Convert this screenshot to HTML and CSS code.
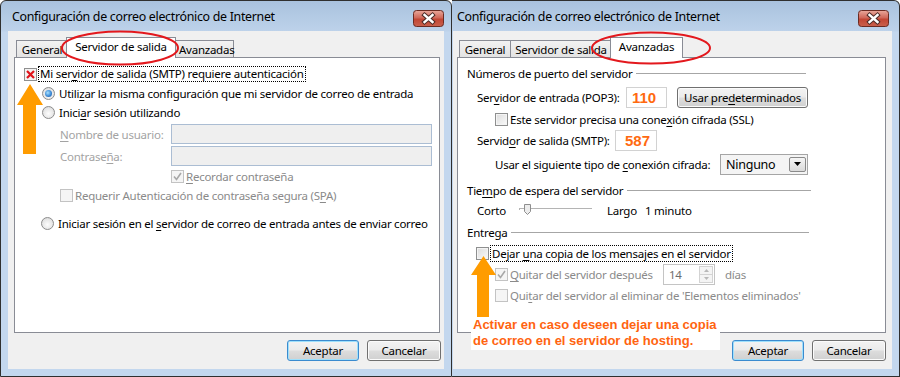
FILE: index.html
```html
<!DOCTYPE html>
<html lang="es">
<head>
<meta charset="utf-8">
<title>Configuración de correo electrónico de Internet</title>
<link rel="stylesheet" href="styles.css">
</head>
<body>
<div class="desk">
  <section class="win win-left">
    <header class="titlebar">
      <span class="title">Configuración de correo electrónico de Internet</span>
      <span class="close"><svg width="31" height="17" viewBox="0 0 31 17"><defs><linearGradient id="cg1" x1="0" y1="0" x2="0" y2="1"><stop offset="0" stop-color="#e9a99c"/><stop offset="0.45" stop-color="#d0685a"/><stop offset="0.55" stop-color="#c24634"/><stop offset="1" stop-color="#c9614d"/></linearGradient></defs><rect x="0.5" y="0.5" width="30" height="16" rx="3" fill="url(#cg1)" stroke="#6b2b22"/><path d="M11.5 5 L19.5 12 M19.5 5 L11.5 12" stroke="#4a2a26" stroke-width="4.4" stroke-linecap="square"/><path d="M11.5 5 L19.5 12 M19.5 5 L11.5 12" stroke="#ffffff" stroke-width="2.4" stroke-linecap="square"/></svg></span>
    </header>
    <div class="client">
      <div class="tabs">
        <span class="tab t-gen-l">General</span>
        <span class="tab active t-sal-l">Servidor de salida</span>
        <span class="tab t-ava-l">Avanzadas</span>
      </div>
      <div class="panel">
        <div class="row l-r1">
          <span class="chk chk-x"><svg width="11" height="11" viewBox="0 0 11 11"><path d="M2 2 L9 9 M9 2 L2 9" stroke="#e0141b" stroke-width="2.2"/></svg></span>
          <span class="focus">Mi ser<u>v</u>idor de salida (SMTP) requiere autenticación</span>
        </div>
        <div class="row l-r2"><span class="radio on"></span><span class="rtext">Utili<u>z</u>ar la misma configuración que mi servidor de correo de entrada</span></div>
        <div class="row l-r3"><span class="radio"></span><span class="rtext">Inici<u>a</u>r sesión utilizando</span></div>
        <div class="row l-field l-f1"><span class="lbl dis"><u>N</u>ombre de usuario:</span><span class="input dis-input"></span></div>
        <div class="row l-field l-f2"><span class="lbl dis">Contrase<u>ñ</u>a:</span><span class="input dis-input"></span></div>
        <div class="row l-rem"><span class="chk chk-dis"><svg width="11" height="11" viewBox="0 0 11 11"><path d="M2 5.5 L4.5 8.5 L9 2" fill="none" stroke="#a8a8a8" stroke-width="1.6"/></svg></span><span class="ctext dis2"><u>R</u>ecordar contraseña</span></div>
        <div class="row l-spa"><span class="chk chk-dis"></span><span class="ctext dis2">Requerir Autenticación de contraseña segura (S<u>P</u>A)</span></div>
        <div class="row l-r8"><span class="radio"></span><span class="rtext">Iniciar sesión en el <u>s</u>ervidor de correo de entrada antes de enviar correo</span></div>
      </div>
      <div class="buttons">
        <span class="btn btn-default">Aceptar</span>
        <span class="btn">Cancelar</span>
      </div>
    </div>
    <svg class="mark-ellipse mark-l" width="122" height="38" viewBox="0 0 122 38"><ellipse cx="61" cy="19" rx="58" ry="16.5" fill="none" stroke="#e3181d" stroke-width="2"/></svg>
    <svg class="mark-arrow arrow-l" width="28" height="72" viewBox="0 0 28 72"><polygon points="13,0 26,21 19,21 19,70 6,70 6,21 0,21" fill="#ff9c00"/></svg>
  </section>

  <section class="win win-right">
    <header class="titlebar">
      <span class="title">Configuración de correo electrónico de Internet</span>
      <span class="close"><svg width="31" height="17" viewBox="0 0 31 17"><defs><linearGradient id="cg2" x1="0" y1="0" x2="0" y2="1"><stop offset="0" stop-color="#e9a99c"/><stop offset="0.45" stop-color="#d0685a"/><stop offset="0.55" stop-color="#c24634"/><stop offset="1" stop-color="#c9614d"/></linearGradient></defs><rect x="0.5" y="0.5" width="30" height="16" rx="3" fill="url(#cg2)" stroke="#6b2b22"/><path d="M11.5 5 L19.5 12 M19.5 5 L11.5 12" stroke="#4a2a26" stroke-width="4.4" stroke-linecap="square"/><path d="M11.5 5 L19.5 12 M19.5 5 L11.5 12" stroke="#ffffff" stroke-width="2.4" stroke-linecap="square"/></svg></span>
    </header>
    <div class="client">
      <div class="tabs">
        <span class="tab t-gen-r">General</span>
        <span class="tab t-sal-r">Servidor de salida</span>
        <span class="tab active t-ava-r">Avanzadas</span>
      </div>
      <div class="panel">
        <div class="group g1"><span class="gtext">Números de puerto del servidor</span><span class="gline"></span></div>
        <div class="row r-pop">
          <span class="plabel w-pop">Ser<u>v</u>idor de entrada (POP3):</span>
          <span class="port p-pop">110</span>
          <span class="btn btn-wide">Usar pre<u>d</u>eterminados</span>
        </div>
        <div class="row r-ssl"><span class="chk"></span><span class="ctext">Este servidor precisa una cone<u>x</u>ión cifrada (SSL)</span></div>
        <div class="row r-smtp">
          <span class="plabel w-smtp">Servid<u>o</u>r de salida (SMTP):</span>
          <span class="port p-smtp">587</span>
        </div>
        <div class="row r-cif">
          <span class="plabel w-cif">Usar el siguiente tipo de <u>c</u>onexión cifrada:</span>
          <span class="select"><span class="sel-text">Ninguno</span><span class="sel-btn"><svg width="7" height="4" viewBox="0 0 7 4"><polygon points="0,0 7,0 3.5,4" fill="#000"/></svg></span></span>
        </div>
        <div class="group g2"><span class="gtext">Tie<u>m</u>po de espera del servidor</span><span class="gline"></span></div>
        <div class="row r-cor">
          <span class="plabel w-cor">Corto</span>
          <span class="slider"><svg width="74" height="14" viewBox="0 0 74 14"><rect x="0" y="5" width="73" height="1" fill="#b4b4b4"/><rect x="0" y="6" width="73" height="1" fill="#ffffff"/><rect x="0" y="5" width="1" height="2" fill="#b4b4b4"/><path d="M5.5 1.5 H11.5 V8.5 L8.5 11.5 L5.5 8.5 Z" fill="#ececec" stroke="#8e8e8e"/></svg></span>
          <span class="plabel w-lar">Largo</span>
          <span>1 minuto</span>
        </div>
        <div class="group g3"><span class="gtext">Entrega</span><span class="gline"></span></div>
        <div class="row r-dej"><span class="chk"></span><span class="ctext focus">Dejar <u>u</u>na copia de los mensajes en el servidor</span></div>
        <div class="row r-q1">
          <span class="chk chk-dis"><svg width="11" height="11" viewBox="0 0 11 11"><path d="M2 5.5 L4.5 8.5 L9 2" fill="none" stroke="#a8a8a8" stroke-width="1.6"/></svg></span>
          <span class="ctext dis2 w-q1"><u>Q</u>uitar del servidor después</span>
          <span class="spin"><span class="spin-val">14</span><span class="spin-btns"><span class="spin-b"><svg width="5" height="3" viewBox="0 0 5 3"><polygon points="0,3 5,3 2.5,0" fill="#b8b8b8"/></svg></span><span class="spin-b"><svg width="5" height="3" viewBox="0 0 5 3"><polygon points="0,0 5,0 2.5,3" fill="#b8b8b8"/></svg></span></span></span>
          <span class="dis2 dias">días</span>
        </div>
        <div class="row r-q2"><span class="chk chk-dis"></span><span class="ctext dis2">Qui<u>t</u>ar del servidor al eliminar de 'Elementos eliminados'</span></div>
      </div>
      <div class="buttons">
        <span class="btn btn-default">Aceptar</span>
        <span class="btn">Cancelar</span>
      </div>
    </div>
    <svg class="mark-ellipse mark-r" width="122" height="36" viewBox="0 0 122 36"><ellipse cx="61" cy="18" rx="59" ry="15.5" fill="none" stroke="#e3181d" stroke-width="2"/></svg>
    <svg class="mark-arrow arrow-r" width="26" height="64" viewBox="0 0 26 64"><polygon points="12.5,0 25,19 18,19 18,64 6,64 6,19 0,19" fill="#ff9c00"/></svg>
    <div class="note">Activar en caso deseen dejar una copia<br>de correo en el servidor de hosting.</div>
  </section>
</div>
</body>
</html>
```

FILE: styles.css
```css
* { box-sizing: border-box; }
html, body { margin: 0; padding: 0; }
body {
  width: 900px;
  height: 377px;
  overflow: hidden;
  background: #ffffff;
  font-family: "Noto Sans", "Open Sans", sans-serif;
  font-size: 11.5px;
  letter-spacing: -0.25px;
  color: #000;
}
u { text-decoration: underline; text-underline-offset: 2px; text-decoration-thickness: 1px; }

.desk { display: flex; width: 900px; height: 377px; }

.win {
  position: relative;
  height: 377px;
  display: flex;
  flex-direction: column;
  border: 1px solid #2f2f2f;
  border-radius: 6px 6px 0 0;
  background: linear-gradient(#a9c2de 0px, #bdd2ea 30px, #c3d7ee 31px, #c3d7ee 100%);
}
.win-left { width: 452px; padding: 0 7px 7px 7px; }
.win-right { width: 448px; border-left: none; border-radius: 0 6px 0 0; padding: 0 7px 7px 1px; }

.titlebar {
  height: 30px;
  display: flex;
  align-items: center;
  justify-content: space-between;
  flex: none;
}
.win-left .titlebar { padding-left: 4px; }
.win-right .titlebar { padding-left: 4px; padding-right: 3px; }
.title { font-size: 12.4px; letter-spacing: -0.3px; color: #000; margin-top: 1px; }
.close { display: flex; margin-top: 5px; }

.client {
  flex: 1;
  background: #f0f0f0;
  display: flex;
  flex-direction: column;
}
.win-left .client { padding: 6px 4px 0 6px; }
.win-right .client { padding: 6px 6px 0 4px; }

.tabs { display: flex; align-items: flex-end; height: 20px; position: relative; z-index: 2; }
.win-left .tabs { padding-left: 2px; }
.win-right .tabs { padding-left: 2px; }

.tab {
  height: 17px;
  border: 1px solid #898c95;
  border-bottom: none;
  background: linear-gradient(#f2f2f2, #e3e3e3);
  display: flex;
  align-items: center;
  justify-content: center;
  white-space: nowrap;
}
.tab + .tab { margin-left: -1px; }
.tab.active {
  height: 21px;
  background: #ffffff;
  margin: 0 -2px -1px -2px;
  position: relative;
  z-index: 2;
  padding-bottom: 3px;
}
.t-gen-l { width: 52px; }
.t-sal-l { width: 110px; }
.t-ava-l { width: 61px; justify-content: flex-start; padding-left: 5px; }
.t-gen-r { width: 52px; }
.t-sal-r { width: 102px; }
.t-ava-r { width: 73px; }

.panel {
  height: 276px;
  background: #ffffff;
  border: 1px solid #898c95;
  position: relative;
  z-index: 1;
  display: flex;
  flex-direction: column;
}

.row { display: flex; align-items: center; white-space: nowrap; }

/* left panel rows */
.l-r1 { margin-top: 6px; height: 20px; padding-left: 9px; }
.l-r1 .focus { margin-left: 2px; }
.l-r2 { height: 19px; padding-left: 27px; }
.l-r3 { height: 19px; padding-left: 27px; }
.l-field { height: 20px; margin-top: 2px; padding-left: 45px; }
.lbl { width: 111px; }
.input { width: 261px; height: 20px; }
.dis-input { background: #efefef; border: 1px solid #abbdd3; }
.l-rem { height: 20px; padding-left: 156px; }
.l-spa { height: 19px; padding-left: 45px; }
.l-r8 { height: 20px; margin-top: 8px; padding-left: 26px; }

.rtext { margin-left: 4px; }
.ctext { margin-left: 2px; }
.dis { color: #a3a3a3; }
.dis2 { color: #8a8a8a; }

.focus { outline: 1px dotted #000; outline-offset: 0; padding: 0 1px; line-height: 14px; }

/* controls */
.chk {
  width: 13px; height: 13px; flex: none;
  border: 1px solid #8e8f8f;
  background: linear-gradient(135deg, #dcdcdc, #fafafa);
  box-shadow: inset 0 0 0 1px #f4f4f4;
  display: flex; align-items: center; justify-content: center;
}
.chk-x { background: #f3f3f3; box-shadow: none; border-color: #8f8f8f; }
.chk-dis { border-color: #c3c3c3; background: #f5f5f5; box-shadow: none; }
.radio {
  width: 13px; height: 13px; flex: none;
  border-radius: 50%;
  border: 1px solid #8c8c8c;
  background: radial-gradient(circle at 50% 60%, #fdfdfd 0%, #e6e6e6 60%, #cfcfcf 100%);
  position: relative;
}
.radio.on::after {
  content: "";
  position: absolute;
  left: 2px; top: 2px;
  width: 7px; height: 7px;
  border-radius: 50%;
  background: radial-gradient(circle at 40% 40%, #a8e2ff 0%, #3c8ad6 55%, #1a4f97 100%);
}

.btn {
  height: 21px;
  display: inline-flex; align-items: center; justify-content: center;
  border: 1px solid #707070;
  border-radius: 3px;
  background: linear-gradient(#f3f3f3 0%, #ebebeb 48%, #dddddd 52%, #d0d0d0 100%);
  box-shadow: inset 0 0 0 1px #fbfbfb;
  white-space: nowrap;
}
.btn-default { border-color: #3b8bcf; box-shadow: inset 0 0 0 1px #9ee0fc; }
.buttons { display: flex; justify-content: flex-end; gap: 8px; margin-top: 7px; }
.win-left .buttons { margin-right: -1px; }
.buttons .btn { width: 72px; }
.buttons .btn + .btn { width: 74px; }

/* right panel */
.group { display: flex; align-items: center; height: 18px; padding-left: 9px; }
.gtext { white-space: nowrap; }
.gline { height: 1px; background: #a6a6a6; flex: none; margin-left: 4px; }
.g1 { margin-top: 6px; }
.g1 .gline { width: 170px; }
.g2 { margin-top: 7px; }
.g2 .gline { width: 184px; }
.g3 { margin-top: 3px; }
.g3 .gline { width: 298px; }

.r-pop { height: 21px; margin-top: 5px; padding-left: 19px; }
.w-pop { width: 149px; }
.port {
  height: 21px; border: 1px solid #d2d2d2; background: #fff;
  font-family: "Liberation Sans", Arial, sans-serif; font-weight: bold; font-size: 15px; letter-spacing: 0; color: #ff6a10;
  display: flex; align-items: center; padding-left: 5px;
}
.p-pop { width: 41px; }
.p-smtp { width: 42px; padding-left: 9px; }
.btn-wide { width: 131px; margin-left: 10px; }
.r-ssl { height: 20px; margin-top: 1px; padding-left: 37px; }
.r-smtp { height: 21px; margin-top: 1px; padding-left: 19px; }
.w-smtp { width: 138px; }
.r-cif { height: 20px; margin-top: 3px; padding-left: 37px; }
.w-cif { width: 225px; }
.select {
  width: 88px; height: 21px; border: 1px solid #a5a5a5; background: #f4f4f4;
  display: flex; align-items: center; justify-content: space-between; padding: 0 1px 0 5px;
}
.sel-text { font-size: 12.5px; }
.sel-btn {
  width: 17px; height: 15px; border: 1px solid #8a8a8a; border-radius: 2px;
  background: linear-gradient(#f5f5f5, #dadada);
  display: flex; align-items: center; justify-content: center;
}
.r-cor { height: 20px; margin-top: 1px; padding-left: 19px; }
.w-cor { width: 42px; }
.slider { width: 74px; height: 14px; display: flex; margin-right: 14px; }
.w-lar { width: 38px; }
.r-dej { height: 18px; margin-top: 3px; padding-left: 18px; }
.r-dej .focus { margin-left: 2px; line-height: 15px; }
.r-q1 { height: 20px; margin-top: 2px; padding-left: 37px; }
.w-q1 { width: 153px; }
.spin {
  width: 52px; height: 21px; border: 1px solid #c4c4c4; background: #fff;
  display: flex; align-items: center; justify-content: space-between; padding: 1px 1px 1px 5px;
}
.spin-val { color: #6d6d6d; }
.spin-btns { display: flex; flex-direction: column; width: 14px; height: 17px; }
.spin-b { flex: 1; border: 1px solid #d3d3d3; background: #f4f4f4; display: flex; align-items: center; justify-content: center; }
.spin-b + .spin-b { border-top: none; }
.dias { margin-left: 10px; }
.r-q2 { height: 20px; margin-top: 1px; padding-left: 37px; }

/* annotations overlay */
.mark-ellipse { position: absolute; z-index: 5; }
.mark-l { left: 58px; top: 28px; }
.mark-r { left: 138px; top: 29px; }
.mark-arrow { position: absolute; z-index: 5; }
.arrow-l { left: 16px; top: 83px; }
.arrow-r { left: 19px; top: 255px; }
.note {
  position: absolute; z-index: 6;
  left: 19px; top: 316px;
  background: #ffffff;
  padding: 0 3px 1px 2px;
  font-family: "Liberation Sans", Arial, sans-serif;
  font-weight: bold;
  font-size: 13px;
  letter-spacing: 0;
  line-height: 16px;
  color: #ff6410;
  white-space: nowrap;
}
```
